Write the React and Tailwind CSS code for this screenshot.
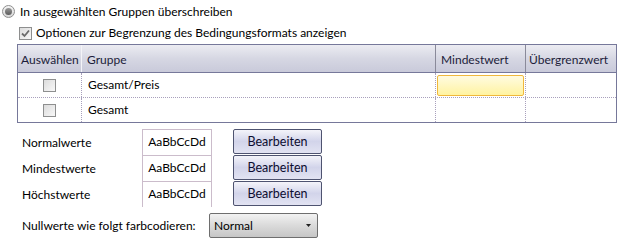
import React from "react";

const rows = ["Gesamt/Preis", "Gesamt"];
const styles = ["Normalwerte", "Mindestwerte", "Höchstwerte"];

function Radio() {
  return (
    <span className="flex h-[13px] w-[13px] items-center justify-center rounded-full border border-[#8f8f8f] bg-gradient-to-b from-[#f4f4f4] to-[#d8d8d8]">
      <span className="h-[7px] w-[7px] rounded-full bg-gradient-to-b from-[#9a9a9a] to-[#5c5c5c]" />
    </span>
  );
}

function Check({ checked }) {
  return (
    <span className="flex h-[13px] w-[13px] items-center justify-center border border-[#8e8f8f] bg-gradient-to-br from-[#dcdcdc] to-[#f8f8f8]">
      {checked && (
        <svg width="9" height="9" viewBox="0 0 9 9">
          <path d="M1 4.5 L3.5 7 L8 1.5" fill="none" stroke="#6b6b6b" strokeWidth="1.8" />
        </svg>
      )}
    </span>
  );
}

function HeadCell({ children, className = "" }) {
  return (
    <div
      className={`flex items-center bg-gradient-to-b from-[#ececf2] via-[#d6d7e3] to-[#c9cada] px-[3px] pt-[2px] text-[#1c1c3a] ${className}`}
    >
      {children}
    </div>
  );
}

export default function App() {
  return (
    <div className="h-[246px] w-[628px] overflow-hidden bg-white text-[12px] leading-none text-black [font-family:Lato,sans-serif]">
      <div className="flex h-[22px] items-center gap-[5px] pl-[2px] pt-[1px]">
        <Radio />
        <span>In ausgewählten Gruppen überschreiben</span>
      </div>
      <div className="flex h-[22px] items-center gap-[4px] pl-[19px]">
        <Check checked />
        <span>Optionen zur Begrenzung des Bedingungsformats anzeigen</span>
      </div>

      <div className="ml-[17px] w-[600px] border border-[#76789a]">
        <div className="grid h-[27px] grid-cols-[64px_354px_90px_90px]">
          <HeadCell className="border-r border-[#f4f4f8] pl-[3px]">Auswählen</HeadCell>
          <HeadCell className="border-r border-[#8a8a9a] pl-[5px]">Gruppe</HeadCell>
          <HeadCell className="border-r border-[#8a8a9a] pl-[5px]">Mindestwert</HeadCell>
          <HeadCell className="pl-[3px]">Übergrenzwert</HeadCell>
        </div>
        {rows.map((r, i) => (
          <div
            key={r}
            className={`grid h-[25px] grid-cols-[64px_354px_90px_90px] border-t border-dotted border-[#a8a0bc] ${
              i === 0 ? "border-t-[#76789a] border-solid" : ""
            }`}
          >
            <div className="flex items-center justify-center border-r border-dotted border-[#a8a0bc]">
              <Check />
            </div>
            <div className="flex items-center border-r border-dotted border-[#a8a0bc] pl-[6px]">{r}</div>
            <div className="flex items-center border-r border-dotted border-[#a8a0bc] px-[1px]">
              {i === 0 && (
                <div className="h-[21px] w-full rounded-[2px] border border-[#f0b83c] bg-gradient-to-b from-[#fffbe0] to-[#fff3a0]" />
              )}
            </div>
            <div />
          </div>
        ))}
      </div>

      <div className="mt-[6px] grid grid-cols-[120px_70px_21px_89px] pl-[22px]">
        {styles.map((s) => (
          <React.Fragment key={s}>
            <div className="flex h-[26px] items-center pt-[1px]">{s}</div>
            <div className="flex h-[26px] items-center justify-center border-x border-t border-[#cbbccb] pb-[1px]">
              AaBbCcDd
            </div>
            <div />
            <div className="flex h-[26px] items-start">
              <button className="flex h-[25px] w-[89px] items-center justify-center rounded-[2px] border border-[#4e5370] bg-gradient-to-b from-[#f4f4fa] via-[#d2d4ea] to-[#e2e3f2] pt-[1px] text-[12.5px] text-[#0c0c30]">
                Bearbeiten
              </button>
            </div>
          </React.Fragment>
        ))}
      </div>

      <div className="mt-[6px] flex items-center pl-[22px]">
        <span className="w-[187px] whitespace-nowrap">Nullwerte wie folgt farbcodieren:</span>
        <div className="flex h-[25px] w-[109px] items-center justify-between rounded-[2px] border border-[#6e6e6e] bg-gradient-to-b from-[#f2f2f2] via-[#dadada] to-[#c6c6c6] pl-[4px] pr-[6px]">
          <span>Normal</span>
          <svg width="5" height="3" viewBox="0 0 5 3">
            <path d="M0 0 H5 L2.5 3 Z" fill="#222" />
          </svg>
        </div>
      </div>
    </div>
  );
}
